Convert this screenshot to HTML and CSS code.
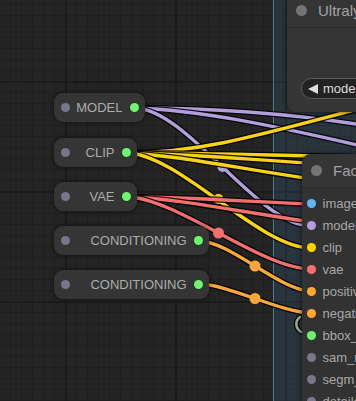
FILE: index.html
```html
<!DOCTYPE html>
<html>
<head>
<meta charset="utf-8">
<link rel="stylesheet" href="styles.css">
</head>
<body>
<div class="canvas">
  <div class="group"></div>
  <svg class="links" width="356" height="401" viewBox="0 0 356 401">
    <g class="link w-model">
      <path class="edge" d="M134,108 C210,108 280,112 362,125"/><path class="core" d="M134,108 C210,108 280,112 362,125"/>
      <path class="edge" d="M134,108 C200,110 270,125 362,146"/><path class="core" d="M134,108 C200,110 270,125 362,146"/>
      <path class="edge" d="M134,108 C187,108 258,226 311,226"/><path class="core" d="M134,108 C187,108 258,226 311,226"/>
      <circle cx="222.5" cy="167" r="5"/>
    </g>
    <g class="link w-clip">
      <path class="edge" d="M126,153 C200,153 260,135 362,108"/><path class="core" d="M126,153 C200,153 260,135 362,108"/>
      <path class="edge" d="M126,153 C200,153 260,155 362,157"/><path class="core" d="M126,153 C200,153 260,155 362,157"/>
      <path class="edge" d="M126,153 C200,154 260,161 362,166"/><path class="core" d="M126,153 C200,154 260,161 362,166"/>
      <path class="edge" d="M126,153 C190,156 250,172 362,186"/><path class="core" d="M126,153 C190,156 250,172 362,186"/>
      <path class="edge" d="M126,153 C178,153 259,248 311,248"/><path class="core" d="M126,153 C178,153 259,248 311,248"/>
      <circle cx="218.5" cy="199" r="5"/>
    </g>
    <g class="link w-vae">
      <path class="edge" d="M126,197 C200,197 260,203 362,206"/><path class="core" d="M126,197 C200,197 260,203 362,206"/>
      <path class="edge" d="M126,197 C190,199 250,215 362,229"/><path class="core" d="M126,197 C190,199 250,215 362,229"/>
      <path class="edge" d="M126,197 C175.6,197 261.4,269 311,269"/><path class="core" d="M126,197 C175.6,197 261.4,269 311,269"/>
      <circle cx="218.5" cy="233" r="5.5"/>
    </g>
    <g class="link w-cond">
      <path class="edge" d="M199,241 C229.6,241 280.4,291 311,291"/><path class="core" d="M199,241 C229.6,241 280.4,291 311,291"/>
      <circle cx="255" cy="266" r="5.5"/>
      <path class="edge" d="M199,284 C227.9,284 282.1,313 311,313"/><path class="core" d="M199,284 C227.9,284 282.1,313 311,313"/>
      <circle cx="255" cy="298.5" r="5.5"/>
    </g>
    <g class="link w-other">
      <path class="edge" d="M300,317 C295,321 295,328 301,332"/><path class="core" d="M300,317 C295,321 295,328 301,332"/>
    </g>
  </svg>

  <div class="node node-ultra">
    <div class="node-title"><span class="title-dot"></span><span class="title-text">UltralyticsDetectorProvider</span></div>
    <div class="ultra-body">
      <div class="combo"><span class="combo-arrow"></span><span class="combo-label">model_name</span></div>
    </div>
  </div>

  <div class="node node-face">
    <div class="node-title"><span class="title-dot"></span><span class="title-text">FaceDetailer</span></div>
    <div class="slots">
      <div class="slot"><span class="dot dot-image"></span><span class="slot-label">image</span></div>
      <div class="slot"><span class="dot dot-model"></span><span class="slot-label">model</span></div>
      <div class="slot"><span class="dot dot-clip"></span><span class="slot-label">clip</span></div>
      <div class="slot"><span class="dot dot-vae"></span><span class="slot-label">vae</span></div>
      <div class="slot"><span class="dot dot-cond"></span><span class="slot-label">positive</span></div>
      <div class="slot"><span class="dot dot-cond"></span><span class="slot-label">negative</span></div>
      <div class="slot"><span class="dot dot-bbox"></span><span class="slot-label">bbox_detector</span></div>
      <div class="slot"><span class="dot dot-none"></span><span class="slot-label">sam_model_opt</span></div>
      <div class="slot"><span class="dot dot-none"></span><span class="slot-label">segm_detector_opt</span></div>
      <div class="slot"><span class="dot dot-none"></span><span class="slot-label">detailer_hook</span></div>
    </div>
  </div>

  <div class="mini mini-model"><span class="dot dot-in"></span><span class="mini-label">MODEL</span><span class="dot dot-out"></span></div>
  <div class="mini mini-clip"><span class="dot dot-in"></span><span class="mini-label">CLIP</span><span class="dot dot-out"></span></div>
  <div class="mini mini-vae"><span class="dot dot-in"></span><span class="mini-label">VAE</span><span class="dot dot-out"></span></div>
  <div class="mini mini-cond1"><span class="dot dot-in"></span><span class="mini-label">CONDITIONING</span><span class="dot dot-out"></span></div>
  <div class="mini mini-cond2"><span class="dot dot-in"></span><span class="mini-label">CONDITIONING</span><span class="dot dot-out"></span></div>
</div>
</body>
</html>
```

FILE: styles.css
```css
html, body {
  margin: 0;
  padding: 0;
  background: #232323;
  overflow: hidden;
  font-family: "Liberation Sans", Arial, sans-serif;
}

.canvas {
  position: relative;
  width: 356px;
  height: 401px;
  overflow: hidden;
  background-color: #242424;
  background-image:
    linear-gradient(90deg, #1a1a1a 2px, transparent 2px),
    linear-gradient(#1a1a1a 2px, transparent 2px),
    linear-gradient(90deg, #1e1e1e 1px, transparent 1px),
    linear-gradient(#1e1e1e 1px, transparent 1px);
  background-size: 110px 110px, 110px 110px, 11px 11px, 11px 11px;
  background-position: 65px 0, 0 81px, 10px 0, 0 4px;
}

.group {
  position: absolute;
  left: 273px;
  top: 0;
  right: 0;
  bottom: 0;
  background: rgba(63, 120, 158, 0.2);
  border-left: 1.5px solid rgba(95, 145, 180, 0.75);
}

.links {
  position: absolute;
  left: 0;
  top: 0;
}

.link path {
  fill: none;
  stroke-linecap: round;
}

.link .edge {
  stroke: rgba(0, 0, 0, 0.85);
  stroke-width: 6;
}

.link .core {
  stroke-width: 3.4;
}

.w-model .core { stroke: #b19fdc; }
.w-model circle { fill: #b19fdc; }
.w-clip .core { stroke: #f9d21c; }
.w-clip circle { fill: #f9d21c; }
.w-vae .core { stroke: #f2716f; }
.w-vae circle { fill: #f2716f; }
.w-cond .core { stroke: #f8a83b; }
.w-cond circle { fill: #f8a83b; }
.w-other .core { stroke: #9aa89a; stroke-width: 2.6; }
.w-other .edge { stroke-width: 5; }

.node {
  position: absolute;
  background: #353535;
  border-radius: 9px;
  box-shadow: 0 0 5px rgba(0, 0, 0, 0.6);
  overflow: hidden;
}

.node-ultra {
  left: 287px;
  top: -6px;
  width: 220px;
  height: 118px;
}

.node-face {
  left: 302px;
  top: 154px;
  width: 220px;
  height: 300px;
  background: #323232;
}

.node-title {
  height: 33px;
  display: flex;
  align-items: center;
  gap: 11px;
  padding-left: 9px;
  background: #353535;
  color: #a2a2a2;
  font-size: 15px;
  white-space: nowrap;
  box-shadow: 0 1px 0 #2b2b2b;
}

.title-dot {
  flex: none;
  width: 11px;
  height: 11px;
  border-radius: 50%;
  background: #747474;
}

.ultra-body {
  padding: 51px 0 0 14px;
}

.combo {
  height: 21px;
  box-sizing: border-box;
  border: 1px solid #5c5c5c;
  border-radius: 11px;
  background: #222222;
  display: flex;
  align-items: center;
  gap: 5px;
  padding-left: 6px;
  color: #dddddd;
  font-size: 13px;
  white-space: nowrap;
}

.combo-arrow {
  flex: none;
  width: 0;
  height: 0;
  border-top: 5px solid transparent;
  border-bottom: 5px solid transparent;
  border-right: 10px solid #dddddd;
}

.slots {
  padding-top: 5px;
}

.slot {
  height: 22px;
  display: flex;
  align-items: center;
  gap: 7px;
  padding-left: 4.5px;
  color: #a8a8a8;
  font-size: 13px;
  white-space: nowrap;
}

.dot {
  flex: none;
  width: 9px;
  height: 9px;
  border-radius: 50%;
}

.dot-image { background: #64b5f6; }
.dot-model { background: #b39ddb; }
.dot-clip { background: #ffd500; }
.dot-vae { background: #ff6e6e; }
.dot-cond { background: #ffa931; }
.dot-bbox { background: #6ef26e; }
.dot-none { background: #78788a; }

.mini {
  position: absolute;
  left: 54px;
  height: 29px;
  box-sizing: border-box;
  display: flex;
  align-items: center;
  padding: 0 6.5px 0 6.5px;
  background: #353535;
  border-radius: 9px;
  box-shadow: 0 0 5px rgba(0, 0, 0, 0.55);
}

.mini-model { top: 93px; width: 91px; }
.mini-clip { top: 138px; width: 83px; }
.mini-vae { top: 182px; width: 83px; }
.mini-cond1 { top: 226px; width: 155px; }
.mini-cond2 { top: 270px; width: 155px; }

.mini-label {
  flex: 1;
  text-align: right;
  padding-right: 7px;
  color: #acacac;
  font-size: 13px;
  white-space: nowrap;
}

.dot-in { background: #76768a; }
.dot-out {
  background: #72f272;
  box-shadow: 0 0 0 1px rgba(20, 60, 20, 0.7);
}
```
